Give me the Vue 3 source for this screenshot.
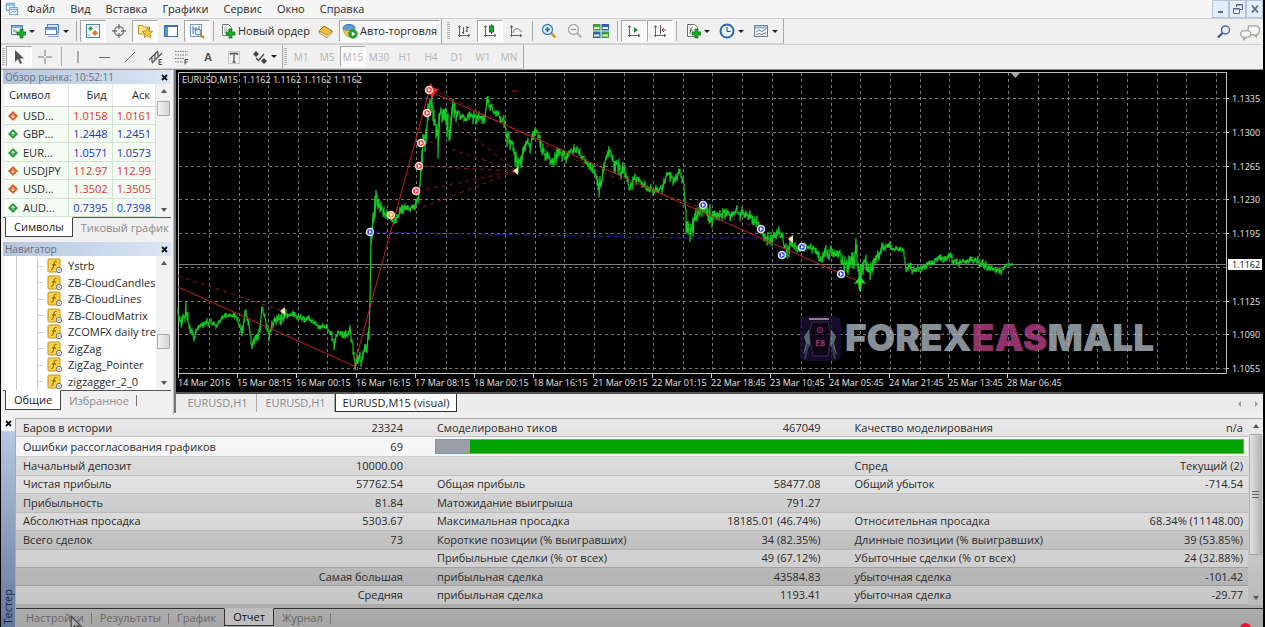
<script setup>
const menus = ['Файл', 'Вид', 'Вставка', 'Графики', 'Сервис', 'Окно', 'Справка']

const plus = (x, y) => `<path d="M${x + 3} ${y}h3v3h3v3h-3v3h-3v-3h-3v-3h3z" fill="#19a92b" stroke="#0b6f17" stroke-width=".7"/>`
const axes = '<path d="M3.500 3v11M2 12.500h12M2 4.500L3.500 2.500 5 4.500M12 11l2 1.500-2 1.500" fill="none" stroke="#666"/>'

const icons = {
  app: '<rect x="1.500" y="1.500" width="9" height="8" fill="#dcecf8" stroke="#5a8fc0"/><path d="M2 3.500h8" stroke="#5a8fc0"/><rect x="5.500" y="6.500" width="9" height="8" fill="#f3f9fd" stroke="#5a8fc0"/><path d="M6 8.500h8M7 12.500l2-2 2 1 2-2" fill="none" stroke="#5a8fc0"/>',
  newChart: '<rect x="1.500" y="2.500" width="11" height="9" fill="#f4fbff" stroke="#4b7fae"/><path d="M2 4h10" stroke="#7fb0d8" stroke-width="2"/><path d="M4 9V6M6 10V7" stroke="#3b8f3b"/>' + plus(7, 6),
  profiles: '<rect x="3.500" y="1.500" width="11" height="8" fill="#cfe3f5" stroke="#5582b2"/><rect x="1.500" y="4.500" width="11" height="7" fill="#fff" stroke="#5582b2"/><path d="M2 6h10" stroke="#6d9fd0" stroke-width="2"/><path d="M4 13.500h10V8" fill="none" stroke="#8aa9c9"/>',
  market: '<rect x="1.500" y="1.500" width="13" height="13" fill="#f6fbff" stroke="#4c83b8"/><path d="M5.500 3l2.500 2.500L5.500 8 3 5.500z" fill="#2fa04a"/><path d="M10 7l3 3-3 3-3-3z" fill="#e07b2a"/><path d="M10 4h3M3 12h3" stroke="#9bb8d2"/>',
  data: '<circle cx="8" cy="8" r="4.500" fill="none" stroke="#777" stroke-width="1.300"/><path d="M8 1v5M8 10v5M1 8h5M10 8h5" stroke="#777" stroke-width="1.300"/>',
  navigator: '<path d="M1.500 11V2.500h4l1 1.500h6V11z" fill="#ffe28a" stroke="#b8922e"/><path d="M10.500 5l1.500 3 3.500.500-2.500 2.500.600 3.500-3.100-1.700-3.100 1.700.600-3.500L5.500 8.500 9 8z" fill="#f7cb3c" stroke="#a87f1c" stroke-width=".8"/>',
  terminal: '<rect x="1.500" y="2.500" width="13" height="11" fill="#fbfdff" stroke="#3f6ea5"/><rect x="2" y="3" width="3" height="10" fill="#5b8fd0"/><path d="M2 3.500h12" stroke="#3f6ea5"/>',
  tester: '<rect x="1.500" y="1.500" width="11" height="12" fill="#eef6fc" stroke="#6f9cc4"/><path d="M4 3v8M4 6h3M7 4v5M10 3v5" stroke="#50779c"/><circle cx="9" cy="9" r="3" fill="#dceffc" stroke="#5e7890"/><path d="M11 11l4 4" stroke="#b98a30" stroke-width="2"/>',
  order: '<path d="M2.500 1.500h6l3 3v8h-9z" fill="#fff" stroke="#6b7f6b"/><path d="M4 5h3M4 7h5M4 9h3" stroke="#8fa58f"/>' + plus(6, 6),
  book: '<path d="M1 8l5-5 8 5-5 6z" fill="#f3bf3c" stroke="#9c6d12"/><path d="M1 8l8 4 5-4v2l-5 4.500L1 10z" fill="#fbe7a9" stroke="#9c6d12" stroke-width=".7"/>',
  auto: '<ellipse cx="7" cy="5" rx="6" ry="3.500" fill="#5f9fd0" stroke="#3a6f9f"/><path d="M1 6c1 5 3 7 6 8s6-4 6-8c-3 2-9 2-12 0z" fill="#e5c75b" stroke="#9c8a3a" stroke-width=".6"/><circle cx="11" cy="11" r="4.200" fill="#25a537" stroke="#0f7a20" stroke-width=".7"/><path d="M9.800 8.800v4.400l3.600-2.200z" fill="#fff"/>',
  bars: axes + '<path d="M7.500 4v7M6 9.500h1.500M11 3v6M11 4.500h2M9.500 8H11" stroke="#555" fill="none"/>',
  candles: axes + '<path d="M9.500 1v10" stroke="#14701f"/><rect x="7.500" y="3" width="4" height="6" fill="#25a537" stroke="#14701f"/>',
  line: axes + '<path d="M5 10c1-5 4-6 9-1" fill="none" stroke="#777"/>',
  zoomIn: '<path d="M10 10l4.500 4.500" stroke="#c79c3a" stroke-width="2.500"/><circle cx="6.500" cy="6.500" r="5" fill="#dff0ff" stroke="#3c7fc2" stroke-width="1.300"/><path d="M4 6.500h5M6.500 4v5" stroke="#2563a8" stroke-width="1.500"/>',
  zoomOut: '<path d="M10 10l4.500 4.500" stroke="#bbb" stroke-width="2.500"/><circle cx="6.500" cy="6.500" r="5" fill="#f2f2f2" stroke="#aaa" stroke-width="1.300"/><path d="M4 6.500h5" stroke="#999" stroke-width="1.500"/>',
  tile: '<rect x="0" y="1" width="7.500" height="6.500" fill="#3c9b3c"/><rect x="8.500" y="1" width="7.500" height="6.500" fill="#2f62b5"/><rect x="0" y="8.500" width="7.500" height="6.500" fill="#2f62b5"/><rect x="8.500" y="8.500" width="7.500" height="6.500" fill="#3c9b3c"/><path d="M1 4h5.500v2H1zM9.500 4H15v2H9.500zM1 11.500h5.500v2H1zM9.500 11.500H15v2H9.500z" fill="#e2efbd"/>',
  scroll: axes + '<path d="M8 4v6l4-3z" fill="#2d8a4a"/>',
  shift: axes + '<path d="M8.500 2v9" stroke="#555"/><path d="M14 7h-4M12 5l-2 2 2 2" stroke="#7a5048" fill="none"/>',
  indicators: '<path d="M2.500 1.500h7l3 3v9h-10z" fill="#fff" stroke="#5f7a5f"/><path d="M8 4c-2 0-2 1-2.500 4S5 11 4 11M4.500 7h3" fill="none" stroke="#4b6b4b"/>' + plus(7, 6),
  clock: '<circle cx="8" cy="8" r="6.500" fill="#eaf4ff" stroke="#2b67b5" stroke-width="2"/><path d="M8 4v4.500h3.500" fill="none" stroke="#345"/>',
  template: '<rect x="1.500" y="2.500" width="13" height="11" fill="#f4f8fb" stroke="#6c7f92"/><path d="M2 4.500h12" stroke="#8fa9c2" stroke-width="2"/><path d="M3 9l3-2 3 1.500L13 6M3 12l3-1.500 3 1L13 9.500" fill="none" stroke="#6c7f92"/>',
  arrow: '<path d="M4 1v12l3-3 2 5 2-1-2-4.500h4z" fill="#555"/>',
  cross: '<path d="M8 1v6M8 9v6M1 8h6M9 8h6" stroke="#777"/>',
  vline: '<path d="M8 2v12" stroke="#666"/>',
  hline: '<path d="M3 8.500h11" stroke="#666"/>',
  trend: '<path d="M3 13L13 3" stroke="#666"/>',
  channel: '<path d="M1 11l9-9M4 14l10-10M4 7v6M7 4v7M10 3v6" stroke="#555" stroke-width="1.200"/><path d="M14 10.500h-3v5h3M11 13h2.500" fill="none" stroke="#444"/>',
  fibo: '<path d="M1 2.500h13M1 6h13M1 9.500h10M1 13h8" stroke="#777" stroke-dasharray="1.500 1"/><path d="M14 10.500h-3v5M11 13h2.500" fill="none" stroke="#444"/>',
  label: '<rect x="2.500" y="2.500" width="11" height="12" fill="none" stroke="#999" stroke-dasharray="1 1"/><path d="M4 4.500h8M8 4.500V13M4.500 4v2M11.500 4v2M6.500 13h3" stroke="#555" fill="none" stroke-width="1.300"/>',
  shapes: '<path d="M4 2l3 3-3 3-3-3zM12 9l3 3-3 3-3-3z" fill="#444"/><path d="M4 9l2.500 2.500L12 5" fill="none" stroke="#444" stroke-width="1.200"/>',
  search: '<circle cx="9.500" cy="6" r="4" fill="#e9f0fb" stroke="#4a63a8" stroke-width="1.400"/><path d="M6.500 9L2 13.500" stroke="#3a4f98" stroke-width="2.200"/>',
  chat: '<path d="M7 3h7l1.500 2v3L14 10h-1v2l-2-2H8L6.500 8V5z" fill="#f5f5f2" stroke="#a0a09a"/><path d="M2 7h5l1.500 1.500v2L7 12H5l-2 2v-2H2L.700 10.500v-2z" fill="#fff" stroke="#a0a09a"/>',
  fx: '<rect x="1" y="1" width="12" height="13" rx="1" fill="#f8cf45" stroke="#c39522"/><path d="M9.500 3.500c-3-.5-2 2-3 5s-1 3-2.500 3M5 7h4" fill="none" stroke="#6b4c05"/><circle cx="12" cy="12" r="2.700" fill="#e8e8e8" stroke="#777"/><circle cx="12" cy="12" r=".8" fill="#777"/>',
  close: '<path d="M2 2l5 5M7 2L2 7" stroke="#111" stroke-width="1.800"/>'
}

const fileTools = [
  { icon: 'newChart', name: 'Новый график', drop: true },
  { icon: 'profiles', name: 'Профили', drop: true },
  { sep: true },
  { icon: 'market', name: 'Обзор рынка', on: true },
  { icon: 'data', name: 'Окно данных' },
  { icon: 'navigator', name: 'Навигатор', on: true },
  { icon: 'terminal', name: 'Терминал' },
  { icon: 'tester', name: 'Тестер стратегий', on: true },
  { sep: true },
  { icon: 'order', text: 'Новый ордер' },
  { icon: 'book', name: 'MetaEditor' },
  { icon: 'auto', text: 'Авто-торговля', on: true }
]
const chartTools = [
  { icon: 'bars', name: 'Бары' },
  { icon: 'candles', name: 'Свечи', on: true },
  { icon: 'line', name: 'Линия' },
  { sep: true },
  { icon: 'zoomIn', name: 'Увеличить' },
  { icon: 'zoomOut', name: 'Уменьшить' },
  { icon: 'tile', name: 'Расположить окна' },
  { sep: true },
  { icon: 'scroll', name: 'Автопрокрутка', on: true },
  { icon: 'shift', name: 'Сдвиг графика', on: true },
  { sep: true },
  { icon: 'indicators', name: 'Индикаторы', drop: true },
  { icon: 'clock', name: 'Периоды', drop: true },
  { icon: 'template', name: 'Шаблоны', drop: true }
]
const drawTools = [
  { icon: 'arrow', name: 'Курсор', on: true },
  { icon: 'cross', name: 'Перекрестие' },
  { sep: true },
  { icon: 'vline', name: 'Вертикальная линия' },
  { icon: 'hline', name: 'Горизонтальная линия' },
  { icon: 'trend', name: 'Трендовая линия' },
  { icon: 'channel', name: 'Канал' },
  { icon: 'fibo', name: 'Фибоначчи' },
  { letter: 'A', name: 'Текст' },
  { icon: 'label', name: 'Метка' },
  { icon: 'shapes', name: 'Стрелки', drop: true }
]
const frames = ['M1', 'M5', 'M15', 'M30', 'H1', 'H4', 'D1', 'W1', 'MN']

const quotes = [
  ['USD...', '1.0158', '1.0161', 'down'],
  ['GBP...', '1.2448', '1.2451', 'up'],
  ['EUR...', '1.0571', '1.0573', 'up'],
  ['USDJPY', '112.97', '112.99', 'down'],
  ['USD...', '1.3502', '1.3505', 'down'],
  ['AUD...', '0.7395', '0.7398', 'up']
]
const scripts = ['Ystrb', 'ZB-CloudCandles', 'ZB-CloudLines', 'ZB-CloudMatrix', 'ZCOMFX daily tre', 'ZigZag', 'ZigZag_Pointer', 'zigzagger_2_0']

const gridX = Array.from({ length: 35 }, (_, i) => Math.round(209 + i * 29.61))
const gridY = Array.from({ length: 9 }, (_, i) => Math.round(98 + i * 33.75))
const prices = ['1.1335', '1.1300', '1.1265', '1.1230', '1.1195', '', '1.1125', '1.1090', '1.1055']
const times = ['14 Mar 2016', '15 Mar 08:15', '16 Mar 00:15', '16 Mar 16:15', '17 Mar 08:15', '18 Mar 00:15', '18 Mar 16:15', '21 Mar 09:15', '22 Mar 01:15', '22 Mar 18:45', '23 Mar 10:45', '24 Mar 05:45', '24 Mar 21:45', '25 Mar 13:45', '28 Mar 06:45']
const timeX = i => Math.round(178 + i * 59.22)

// x, y, half height of the bars around that point
const trace = [
  [178, 312, 7], [182, 322, 6], [186, 312, 8], [190, 328, 5], [194, 340, 5], [198, 328, 3], [203, 324, 3], [210, 321, 3], [217, 326, 3],
  [223, 316, 4], [230, 315, 3], [238, 319, 3], [242, 333, 6], [245, 312, 6], [249, 325, 5], [252, 345, 7], [256, 338, 5], [260, 325, 6],
  [262, 310, 6], [266, 322, 5], [269, 336, 6], [273, 322, 5], [277, 318, 5], [285, 316, 5], [290, 314, 3], [300, 317, 3], [310, 320, 3],
  [318, 325, 3], [326, 327, 3], [330, 334, 4], [334, 342, 5], [338, 333, 3], [344, 335, 4], [348, 336, 4], [350, 328, 4], [353, 350, 7],
  [356, 365, 6], [359, 358, 6], [362, 360, 5], [364, 348, 6], [367, 345, 7], [369, 330, 12], [371, 255, 30], [374, 212, 16], [376, 196, 9],
  [379, 205, 9], [383, 212, 5], [388, 216, 3], [395, 219, 4], [400, 212, 5], [405, 207, 4], [410, 209, 3], [416, 205, 5], [419, 190, 9],
  [421, 170, 12], [424, 142, 10], [427, 130, 12], [430, 98, 8], [434, 112, 10], [438, 135, 16], [441, 114, 10], [445, 110, 10], [449, 133, 11],
  [453, 108, 9], [456, 113, 6], [462, 117, 5], [470, 117, 5], [480, 117, 5], [484, 122, 5], [487, 99, 6], [492, 108, 4], [498, 116, 4],
  [504, 122, 6], [508, 138, 10], [512, 148, 11], [516, 163, 9], [520, 158, 8], [524, 152, 7], [528, 143, 8], [532, 142, 8], [535, 131, 7],
  [540, 142, 6], [545, 157, 5], [552, 162, 5], [558, 152, 7], [566, 155, 5], [575, 149, 4], [583, 157, 4], [590, 165, 5], [596, 180, 8],
  [599, 187, 7], [603, 172, 5], [607, 152, 6], [613, 157, 7], [619, 168, 9], [625, 172, 7], [630, 188, 6], [634, 176, 5], [640, 182, 4],
  [648, 188, 3], [656, 192, 4], [662, 188, 4], [668, 174, 4], [674, 179, 5], [680, 173, 4], [684, 185, 8], [686, 215, 15], [688, 230, 10],
  [692, 225, 9], [698, 212, 6], [703, 207, 8], [708, 212, 12], [712, 216, 8], [720, 214, 5], [735, 212, 5], [745, 214, 5], [752, 219, 5],
  [760, 228, 6], [766, 236, 6], [772, 240, 6], [779, 233, 5], [783, 239, 6], [787, 252, 9], [791, 244, 8], [796, 248, 5], [804, 246, 4],
  [812, 248, 4], [817, 250, 6], [821, 260, 6], [826, 253, 5], [833, 254, 5], [840, 253, 5], [844, 268, 10], [850, 261, 9], [856, 253, 11],
  [860, 272, 9], [865, 262, 8], [870, 270, 9], [875, 262, 6], [880, 252, 5], [884, 246, 5], [895, 249, 3], [903, 251, 3], [906, 266, 5],
  [915, 270, 3], [925, 267, 3], [935, 260, 3], [948, 257, 4], [960, 263, 3], [975, 260, 3], [985, 265, 4], [995, 270, 3], [1003, 270, 3],
  [1008, 263, 2], [1014, 266, 1]
]
let seed = 17
const rand = () => {
  seed = (seed * 16807) % 2147483647
  return seed / 2147483647
}
let pricePath = ''
for (let i = 0; i < trace.length - 1; i++) {
  const [x0, y0, a0] = trace[i]
  const [x1, y1, a1] = trace[i + 1]
  for (let x = x0; x < x1; x++) {
    const t = (x - x0) / (x1 - x0)
    const amp = a0 + (a1 - a0) * t
    const mid = y0 + (y1 - y0) * t + (rand() - 0.5) * amp * 1.2
    const hi = (mid - amp * (0.1 + rand() ** 2 * 1.1)).toFixed(1)
    const lo = (mid + amp * (0.1 + rand() ** 2 * 1.1)).toFixed(1)
    pricePath += (pricePath ? 'L' : 'M') + x + ' ' + hi + 'L' + x + ' ' + lo
  }
}

const marks = [
  [429, 90, '#f33'], [427, 113, '#f33'], [421, 143, '#f33'], [419, 166, '#f33'], [416, 191, '#f33'], [391, 215, '#f90'], [370, 232, '#24f'],
  [703, 205, '#24f'], [761, 229, '#24f'], [802, 247, '#24f'], [782, 255, '#24f'], [841, 274, '#24f']
]
const exits = [[283, 311], [516, 171], [791, 239]]
const fans = ['450 118', '430 142', '419 166', '418 191', '418 209']

const report = [
  ['Баров в истории', '23324', 'Смоделировано тиков', '467049', 'Качество моделирования', 'n/a'],
  ['Ошибки рассогласования графиков', '69', 'bar'],
  ['Начальный депозит', '10000.00', '', '', 'Спред', 'Текущий (2)'],
  ['Чистая прибыль', '57762.54', 'Общая прибыль', '58477.08', 'Общий убыток', '-714.54'],
  ['Прибыльность', '81.84', 'Матожидание выигрыша', '791.27', '', ''],
  ['Абсолютная просадка', '5303.67', 'Максимальная просадка', '18185.01 (46.74%)', 'Относительная просадка', '68.34% (11148.00)'],
  ['Всего сделок', '73', 'Короткие позиции (% выигравших)', '34 (82.35%)', 'Длинные позиции (% выигравших)', '39 (53.85%)'],
  ['', '', 'Прибыльные сделки (% от всех)', '49 (67.12%)', 'Убыточные сделки (% от всех)', '24 (32.88%)'],
  ['', 'Самая большая', 'прибыльная сделка', '43584.83', 'убыточная сделка', '-101.42'],
  ['', 'Средняя', 'прибыльная сделка', '1193.41', 'убыточная сделка', '-29.77']
]
const testerTabs = ['Настройки', 'Результаты', 'График', 'Отчет', 'Журнал']
</script>

<template>
  <div class="window">
    <header class="top">
      <nav class="menu">
        <svg class="icon" viewBox="0 0 16 16" v-html="icons.app"></svg>
        <button v-for="m in menus" :key="m" class="menu-item">{{ m }}</button>
        <div class="win-buttons">
          <button class="win-btn" aria-label="Свернуть"><svg viewBox="0 0 12 12"><path d="M3 9h5" stroke="#556b88" stroke-width="2" /></svg></button>
          <button class="win-btn" aria-label="Восстановить"><svg viewBox="0 0 12 12"><path d="M4.500 4V1.500h6v5H8M4 2h6" fill="none" stroke="#556b88" /><path d="M1.500 5.500h6v5h-6zM2 6h5" fill="none" stroke="#556b88" /></svg></button>
          <button class="win-btn" aria-label="Закрыть"><svg viewBox="0 0 12 12"><path d="M3 2.500l6 7M9 2.500l-6 7" stroke="#556b88" stroke-width="1.800" /></svg></button>
        </div>
      </nav>
      <div class="bar bar-main">
        <div class="group">
          <template v-for="(t, i) in fileTools" :key="i">
            <span v-if="t.sep" class="sep"></span>
            <button v-else class="tool" :class="{ on: t.on, drop: t.drop, wide: t.text }" :aria-label="t.name || t.text">
              <svg class="icon" viewBox="0 0 16 16" v-html="icons[t.icon]"></svg>
              <span v-if="t.text">{{ t.text }}</span>
              <i v-if="t.drop" class="caret"></i>
            </button>
          </template>
        </div>
        <div class="group">
          <span class="grip"></span>
          <template v-for="(t, i) in chartTools" :key="i">
            <span v-if="t.sep" class="sep"></span>
            <button v-else class="tool" :class="{ on: t.on, drop: t.drop }" :aria-label="t.name">
              <svg class="icon" viewBox="0 0 16 16" v-html="icons[t.icon]"></svg>
              <i v-if="t.drop" class="caret"></i>
            </button>
          </template>
        </div>
        <div class="bar-right">
          <button class="tool" aria-label="Поиск"><svg class="icon" viewBox="0 0 16 16" v-html="icons.search"></svg></button>
          <button class="tool" aria-label="Чат"><svg class="icon big" viewBox="0 0 16 16" v-html="icons.chat"></svg></button>
        </div>
      </div>
      <div class="bar bar-draw">
        <div class="group">
          <span class="grip"></span>
          <template v-for="(t, i) in drawTools" :key="i">
            <span v-if="t.sep" class="sep"></span>
            <button v-else class="tool" :class="{ on: t.on, drop: t.drop }" :aria-label="t.name">
              <b v-if="t.letter" class="letter">{{ t.letter }}</b>
              <svg v-else class="icon" viewBox="0 0 16 16" v-html="icons[t.icon]"></svg>
              <i v-if="t.drop" class="caret"></i>
            </button>
          </template>
        </div>
        <div class="group">
          <span class="grip"></span>
          <button v-for="f in frames" :key="f" class="tool frame" :class="{ on: f === 'M15' }">{{ f }}</button>
        </div>
      </div>
    </header>

    <main class="middle">
      <aside class="side">
        <section class="panel">
          <h2 class="title"><span>Обзор рынка: 10:52:11</span><button class="close" aria-label="Закрыть"><svg viewBox="0 0 9 9" v-html="icons.close"></svg></button></h2>
          <div class="body">
            <table class="quotes">
              <thead><tr><th>Символ</th><th>Бид</th><th>Аск</th></tr></thead>
              <tbody>
                <tr v-for="(q, i) in quotes" :key="i" :class="q[3]">
                  <td>
                    <svg class="dir" viewBox="0 0 10 10">
                      <path d="M5 0l5 5-5 5-5-5z" :fill="q[3] === 'up' ? '#2f9a40' : '#d9602c'" />
                      <path :d="q[3] === 'up' ? 'M5 3v4M3.500 5L5 3l1.500 2' : 'M5 3v4M3.500 5L5 7l1.500-2'" fill="none" stroke="#fff" stroke-width=".8" />
                    </svg>{{ q[0] }}
                  </td>
                  <td>{{ q[1] }}</td>
                  <td>{{ q[2] }}</td>
                </tr>
              </tbody>
            </table>
            <div class="scroll"><i class="up"></i><i class="thumb near"></i><i class="space"></i><i class="down"></i></div>
          </div>
          <div class="tabs"><button class="tab active">Символы</button><button class="tab">Тиковый график</button></div>
        </section>

        <section class="panel">
          <h2 class="title"><span>Навигатор</span><button class="close" aria-label="Закрыть"><svg viewBox="0 0 9 9" v-html="icons.close"></svg></button></h2>
          <div class="body">
            <ul class="tree">
              <li v-for="s in scripts" :key="s"><svg class="fx" viewBox="0 0 16 16" v-html="icons.fx"></svg><span>{{ s }}</span></li>
            </ul>
            <div class="scroll"><i class="up"></i><i class="space"></i><i class="thumb far"></i><i class="down"></i></div>
          </div>
          <div class="tabs"><button class="tab active">Общие</button><button class="tab last">Избранное</button></div>
        </section>
      </aside>

      <section class="charts">
        <svg class="chart" viewBox="176 70 1087 322">
          <rect x="176" y="70" width="1087" height="322" fill="#000" />
          <g stroke="#75797d" stroke-dasharray="3 3">
            <path v-for="x in gridX" :key="'x' + x" :d="`M${x + 0.5} 73V373`" />
            <path v-for="y in gridY" :key="'y' + y" :d="`M179 ${y + 0.5}H1226`" />
          </g>
          <path d="M178.500 374V72.500H1227" fill="none" stroke="#b9bcbe" />
          <path d="M178 373.500H1226.500V72" fill="none" stroke="#c4c7c9" />
          <path v-for="(t, i) in times" :key="'k' + i" :d="`M${timeX(i) + 0.5} 374v4`" stroke="#c8c8c8" />
          <path d="M179 264.500H1227" stroke="#7b7f82" />
          <path d="M369 232L686 238H782" fill="none" stroke="#2424b0" stroke-dasharray="4 3" />
          <g fill="none" stroke="#8d1717" stroke-dasharray="4 4">
            <path d="M178 276L283 311M431 88L600 172L790 239" />
            <path v-for="f in fans" :key="f" :d="`M516 171L${f}`" />
          </g>
          <path :d="pricePath" fill="none" stroke="#16c824" stroke-width="1.200" />
          <path d="M178 287L354 366L429 91L860 282" fill="none" stroke="#c22020" />
          <path d="M512 91h6" stroke="#a01818" />
          <path d="M427 90l4-7 2 5 6 1-4 4-3 6-2-5z" fill="#f22" />
          <path d="M860 276l6 8-4-1-1 8h-2l-1-8-4 1z" fill="#1fe02c" />
          <g v-for="(m, i) in marks" :key="'m' + i">
            <circle :cx="m[0]" :cy="m[1]" r="3.500" :fill="m[2]" stroke="#e8dcdc" stroke-width="1.500" />
            <path :d="`M${m[0] - 1} ${m[1] - 2}l3 2-3 2z`" fill="#fff" />
          </g>
          <path v-for="(e, i) in exits" :key="'e' + i" :d="`M${e[0] + 2} ${e[1] - 4}v8l-5-4z`" fill="#f2e6a8" />
          <path d="M1011 73h9l-4.500 5z" fill="#a5a5a5" />
          <g class="axis">
            <text x="182" y="83">EURUSD,M15&#160; 1.1162 1.1162 1.1162 1.1162</text>
            <template v-for="(p, i) in prices" :key="'p' + i">
              <path v-if="p" :d="`M1227 ${gridY[i] + 0.5}h2`" stroke="#c8c8c8" />
              <text x="1232" :y="gridY[i] + 4">{{ p }}</text>
            </template>
            <text v-for="(t, i) in times" :key="t" :x="timeX(i)" y="386">{{ t }}</text>
            <rect x="1228" y="259" width="34" height="11" fill="#fff" />
            <text x="1232" y="268" class="now">1.1162</text>
          </g>
          <g opacity=".75">
            <rect x="800" y="316" width="41" height="45" rx="6" fill="#1c1038" />
            <path d="M809 319h20" stroke="#c9a3b4" stroke-width="2" />
            <path d="M812 322h16l3 12-3 22h-15l-4-22z" fill="#15091f" stroke="#50405f" />
            <path d="M809 329l-5 8 2 6-3 12 7-10zM831 329l5 8-2 6 3 12-7-10z" fill="#768c98" />
            <path d="M808 344l-3 15M832 344l3 15" stroke="#46566a" stroke-width="2" />
            <circle cx="820" cy="330" r="3" fill="#5d1e45" stroke="#a13c70" />
            <text x="820" y="346" class="badge">E8</text>
            <text x="845" y="351" class="brand">FOREX<tspan class="pink">EAS</tspan>MALL</text>
          </g>
        </svg>
        <div class="chart-tabs">
          <button class="ctab">EURUSD,H1</button>
          <button class="ctab">EURUSD,H1</button>
          <button class="ctab active">EURUSD,M15 (visual)</button>
          <span class="arrows"><i class="left"></i><i class="right"></i></span>
        </div>
      </section>
    </main>

    <section class="tester">
      <div class="strip"><button class="close" aria-label="Закрыть"><svg viewBox="0 0 9 9" v-html="icons.close"></svg></button><span class="strip-name">Тестер</span></div>
      <div class="tester-body">
        <div class="report-wrap">
          <table class="report">
            <colgroup><col class="c1"><col class="c2"><col class="c3"><col class="c4"><col class="c5"><col class="c6"></colgroup>
            <tbody>
              <tr v-for="(r, i) in report" :key="i">
                <template v-if="r[2] === 'bar'">
                  <td>{{ r[0] }}</td><td>{{ r[1] }}</td>
                  <td colspan="4" class="bar-cell"><div class="quality"><i></i></div></td>
                </template>
                <template v-else><td v-for="(c, j) in r" :key="j">{{ c }}</td></template>
              </tr>
            </tbody>
          </table>
          <div class="scroll grey"><i class="up"></i><i class="thumb long"><svg viewBox="0 0 7 7"><path d="M0 .500h7M0 3.500h7M0 6.500h7" stroke="#666" /></svg></i><i class="space"></i><i class="down"></i></div>
        </div>
        <div class="tabs tester-tabs">
          <button v-for="t in testerTabs" :key="t" class="tab" :class="{ active: t === 'Отчет', last: t !== 'График' && t !== 'Отчет' }">{{ t }}</button>
        </div>
      </div>
      <svg class="cursor" viewBox="0 0 10 14"><path d="M1 1v11l3-3 2 5 2-1-2-4h3z" fill="#aaa" stroke="#444" /></svg>
      <i class="rec"></i>
    </section>
  </div>
</template>

<style>
body {
  background: #000;
  overflow: hidden;
}
</style>

<style scoped>
* {
  box-sizing: border-box;
}
.window {
  min-height: 100vh;
  display: flex;
  flex-direction: column;
  border-left: 1px solid #000;
  border-right: 2px solid #000;
  background: #f0f0f0;
  color: #2a2a2a;
  font: 11px/14px "Open Sans", "Noto Sans", sans-serif;
}
button {
  margin: 0;
  padding: 0;
  border: 0;
  background: none;
  font: inherit;
  color: inherit;
  white-space: nowrap;
}
.icon {
  width: 16px;
  height: 16px;
  flex: none;
}
.icon.big {
  width: 20px;
  height: 20px;
}
.menu {
  display: flex;
  align-items: center;
  height: 18px;
  padding-left: 4px;
  gap: 15px;
  background: #f5f5f5;
}
.menu .icon {
  width: 14px;
  height: 14px;
  margin-right: -7px;
}
.win-buttons {
  display: flex;
  align-self: stretch;
  margin-left: auto;
}
.win-btn {
  width: 17px;
  border: 1px solid #b4c4d8;
  background: #e4edf8;
}
.win-btn svg {
  display: block;
  width: 12px;
  height: 12px;
  margin: 0 auto;
}
.bar {
  display: flex;
  border-top: 1px solid #cfcfcf;
}
.bar-main {
  height: 26px;
}
.bar-draw {
  height: 25px;
}
.group {
  display: flex;
  align-items: stretch;
  padding: 1px 1px 1px 4px;
  border-right: 1px solid #a8a8a8;
  border-bottom: 1px solid #d4d4d4;
}
.bar-draw .group {
  padding-left: 0;
}
.tool {
  display: flex;
  align-items: center;
  justify-content: center;
  gap: 3px;
  width: 26px;
  border: 1px solid transparent;
}
.tool.drop {
  width: 34px;
}
.tool.wide {
  width: auto;
  gap: 2px;
  padding: 0 2px;
}
.tool.on {
  border-color: #a5a5a5 #fff #fff #a5a5a5;
  background: #f9f9f9;
}
.letter {
  color: #555;
}
.frame {
  color: #b4b4b4;
  font-size: 10px;
}
.caret {
  border: 3px solid transparent;
  border-top-color: #222;
  border-bottom: 0;
}
.sep {
  width: 1px;
  margin: 1px 3px;
  background: #a8a8a8;
}
.grip {
  width: 3px;
  margin: 2px 1px;
  background: repeating-linear-gradient(#b5b5b5 0 1px, #eee 1px 2px);
}
.bar-right {
  display: flex;
  align-items: stretch;
  margin-left: auto;
}
.middle {
  display: flex;
  align-items: flex-start;
}
.side {
  flex: none;
  width: 173px;
  border-top: 1px solid #999;
  border-right: 1px solid #bbb;
}
.panel {
  margin: 0 2px 5px;
}
.title {
  display: flex;
  align-items: center;
  justify-content: space-between;
  height: 14px;
  margin: 0;
  padding: 0 2px;
  background: linear-gradient(90deg, #b4c5dc, #dbe6f3);
  color: #66707e;
  font-size: 10px;
  font-weight: 400;
}
.close {
  width: 9px;
  height: 9px;
}
.close svg {
  display: block;
}
.body {
  display: flex;
  margin-left: 1px;
  background: #fff;
}
.quotes {
  flex: 1;
  height: 133px;
  border-collapse: collapse;
  table-layout: fixed;
}
.quotes th {
  width: 43px;
  height: 22px;
  padding: 0 5px;
  border-right: 1px solid #e4e4e4;
  border-bottom: 1px solid #d0d0d0;
  font-weight: 400;
  text-align: right;
}
.quotes th:first-child {
  width: auto;
  text-align: left;
}
.quotes td {
  padding: 0 4px;
  border: 1px solid #cfe6cf;
  border-left: 0;
  background: #f5fcf3;
  line-height: 15px;
  text-align: right;
  white-space: nowrap;
}
.quotes td:first-child {
  text-align: left;
}
.quotes .up td:not(:first-child) {
  color: #2433c4;
}
.quotes .down td:not(:first-child) {
  color: #dc3528;
}
.dir {
  width: 10px;
  height: 10px;
  margin-right: 5px;
  vertical-align: -1px;
}
.scroll {
  display: flex;
  flex: none;
  flex-direction: column;
  align-items: center;
  width: 15px;
  padding: 5px 0;
  background: #f2f2f2;
}
.scroll .up,
.scroll .down {
  border: 3px solid transparent;
}
.scroll .up {
  border-top: 0;
  border-bottom: 4px solid #555;
}
.scroll .down {
  border-bottom: 0;
  border-top: 4px solid #555;
}
.scroll .space {
  flex: 1;
}
.thumb {
  width: 13px;
  height: 15px;
  border: 1px solid #a9a9a9;
  border-radius: 1px;
  background: linear-gradient(90deg, #f4f4f4, #d3d3d3);
}
.thumb.near {
  margin-top: 8px;
}
.thumb.far {
  margin-bottom: 32px;
}
.tabs {
  display: flex;
  height: 20px;
  border-top: 1px solid #555;
}
.tab {
  position: relative;
  padding: 0 8px;
  color: #8a8a8a;
}
.tab.active {
  margin-top: -1px;
  border: 1px solid #444;
  border-top-color: #fff;
  background: #fff;
  color: #222;
}
.panel .tabs {
  padding-left: 2px;
}
.tab.last::after {
  content: "";
  position: absolute;
  top: 4px;
  right: 0;
  width: 1px;
  height: 11px;
  background: #777;
}
.tree {
  flex: 1;
  display: flex;
  flex-direction: column;
  min-width: 0;
  height: 134px;
  margin: 0;
  padding: 2px 0 0 16px;
  list-style: none;
  background: linear-gradient(90deg, transparent 12px, #c8c8c8 12px 13px, transparent 13px);
}
.tree li {
  display: flex;
  flex: 1;
  align-items: center;
  gap: 5px;
  margin-left: 17px;
  border-left: 1px solid #c8c8c8;
  white-space: nowrap;
}
.tree li::before {
  content: "";
  flex: none;
  width: 5px;
  margin-right: -1px;
  border-top: 1px dotted #aaa;
}
.fx {
  flex: none;
  width: 16px;
  height: 16px;
}
.charts {
  flex: 1;
  min-width: 0;
  border-top: 1px solid #8b8b8b;
  border-left: 2px solid #777;
}
.chart {
  display: block;
  width: 100%;
}
.axis text {
  fill: #e6e6e6;
  font-size: 9px;
}
.axis .now {
  fill: #111;
}
.badge {
  fill: #d0447c;
  font-size: 9px;
  font-weight: 700;
  text-anchor: middle;
}
.brand {
  fill: #b5bfc9;
  font: 900 37px Inter, sans-serif;
}
.pink {
  fill: #c0458f;
}
.chart-tabs {
  display: flex;
  height: 21px;
  padding-left: 3px;
  border-top: 2px solid #555;
  background: #ececec;
}
.ctab {
  width: 78px;
  height: 18px;
  border-right: 1px solid #aaa;
  color: #8a8a8a;
}
.ctab.active {
  width: 122px;
  border: 1px solid #333;
  border-top: 0;
  background: #fff;
  color: #222;
}
.arrows {
  display: flex;
  align-items: center;
  gap: 14px;
  margin-left: auto;
  padding-right: 5px;
}
.arrows i {
  border: 3px solid transparent;
}
.arrows .left {
  border-left: 0;
  border-right-color: #999;
}
.arrows .right {
  border-right: 0;
  border-left-color: #999;
}
.tester {
  position: relative;
  display: flex;
  flex: 1;
  margin-top: 3px;
  overflow: hidden;
  background: linear-gradient(#e9e9e9, #a6a6a6);
}
.strip {
  display: flex;
  flex: none;
  flex-direction: column;
  align-items: center;
  justify-content: space-between;
  width: 14px;
  padding: 1px 0 2px;
  background: linear-gradient(#f5f5f5 12px, #b6c8e2 14px, #63779b);
}
.strip-name {
  writing-mode: vertical-rl;
  transform: rotate(180deg);
  color: #10274f;
}
.tester-body {
  flex: 1;
  display: flex;
  flex-direction: column;
  min-width: 0;
  border-top: 1px solid #aaa;
  border-left: 1px solid #aaa;
}
.report-wrap {
  display: flex;
  flex: none;
}
.report {
  flex: 1;
  height: 186px;
  border-collapse: collapse;
  table-layout: fixed;
}
.c1 { width: 22%; }
.c2 { width: 11.6%; }
.c3 { width: 20%; }
.c4 { width: 13.9%; }
.c5 { width: 18%; }
.c6 { width: 14.5%; }
.report td {
  padding: 0 7px;
  border-bottom: 1px solid rgba(90, 90, 90, 0.25);
  line-height: 14px;
  white-space: nowrap;
}
.report td:nth-child(even) {
  padding-right: 27px;
  text-align: right;
}
.report td:nth-child(6) {
  padding-right: 5px;
}
.report tr:nth-child(even) {
  background: rgba(255, 255, 255, 0.3);
}
.report tr:nth-child(2) {
  background: rgba(255, 255, 255, 0.7);
}
.report .bar-cell {
  padding: 0 4px 0 5px;
}
.quality {
  height: 15px;
  border: 1px solid #6fa0b8;
  background: #00a300;
}
.quality i {
  display: block;
  width: 34px;
  height: 100%;
  background: #9ca0a6;
}
.scroll.grey {
  background: rgba(255, 255, 255, 0.15);
}
.thumb.long {
  display: flex;
  align-items: center;
  justify-content: center;
  height: 121px;
  margin-top: 6px;
  background: linear-gradient(90deg, #e2e2e2, #b4b4b4);
}
.thumb.long svg {
  width: 7px;
  height: 7px;
}
.tester-tabs {
  flex: 1;
  min-height: 19px;
  margin-top: 3px;
  padding-left: 2px;
  border-top-color: #333;
}
.tester-tabs .tab {
  height: 18px;
  color: #666;
}
.tester-tabs .tab.active {
  border-color: #333;
  border-top-color: #bbb;
  background: #bdbdbd;
  color: #111;
}
.cursor {
  position: absolute;
  left: 69px;
  bottom: -5px;
  width: 12px;
  height: 17px;
}
.rec {
  position: absolute;
  right: 12px;
  bottom: -7px;
  width: 11px;
  height: 11px;
  border-radius: 50%;
  background: #e8173a;
}
</style>
